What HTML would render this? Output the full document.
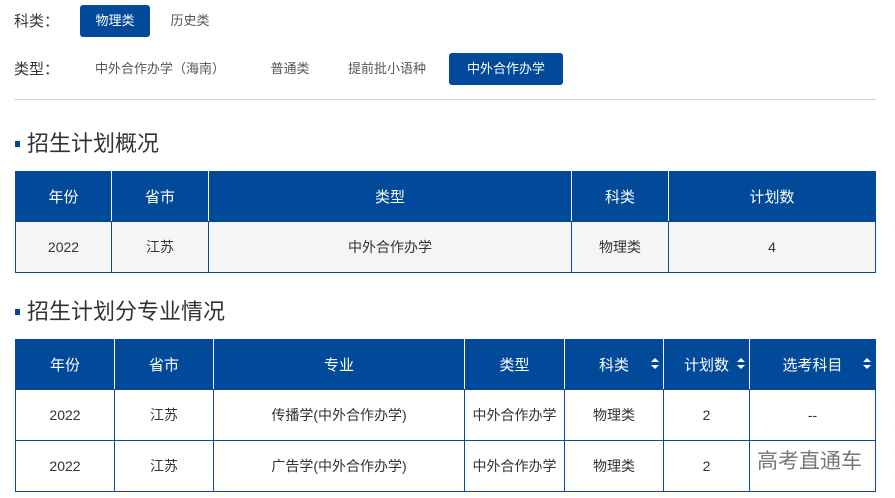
<!DOCTYPE html>
<html><head><meta charset="utf-8"><style>
*{margin:0;padding:0;box-sizing:border-box}
body{width:895px;height:498px;background:#fff;font-family:"Liberation Sans","Noto Sans CJK SC",sans-serif;position:relative;overflow:hidden;color:#333}
.a{position:absolute}
.lbl{font-size:15px;color:#333}
.btn{position:absolute;height:32px;line-height:32px;font-size:13px;text-align:center;color:#555;border-radius:3px}
.on{background:#004a99;color:#fff}
.h{font-size:22px;color:#333;line-height:26px}
.sq{position:absolute;width:5px;height:6px;background:#004a99}
table{position:absolute;border-collapse:collapse;table-layout:fixed}
td,th{border:1px solid #0d4a96;text-align:center;font-size:14px;color:#333;font-weight:normal}
th{background:#004a99;color:#fff;font-size:15px;border-color:#fff;border-top-color:#004a99;border-bottom-color:#004a99}
th:first-child{border-left-color:#004a99}th:last-child{border-right-color:#004a99}
.s{position:relative}
.s:after{content:"";position:absolute;right:4px;top:18px;border:4px solid transparent;border-bottom:4px solid #fff;border-top:none}
.s:before{content:"";position:absolute;right:4px;top:25px;border:4px solid transparent;border-top:4px solid #fff;border-bottom:none}
</style></head><body>
<div class="a lbl" style="left:14px;top:10px">科类：</div>
<div class="btn on" style="left:80px;top:5px;width:70px">物理类</div>
<div class="btn" style="left:155px;top:5px;width:70px">历史类</div>
<div class="a lbl" style="left:14px;top:58px">类型：</div>
<div class="btn" style="left:80px;top:53px;width:160px">中外合作办学（海南）</div>
<div class="btn" style="left:255px;top:53px;width:70px">普通类</div>
<div class="btn" style="left:332px;top:53px;width:110px">提前批小语种</div>
<div class="btn on" style="left:449px;top:53px;width:114px">中外合作办学</div>
<div class="a" style="left:14px;top:99px;width:862px;height:1px;background:#d4d4d4"></div>
<div class="sq" style="left:15px;top:141px"></div>
<div class="a h" style="left:27px;top:131px">招生计划概况</div>
<table style="left:15px;top:171px;width:861px">
<colgroup><col style="width:96px"><col style="width:97px"><col style="width:363px"><col style="width:97px"><col></colgroup>
<tr style="height:50px"><th>年份</th><th>省市</th><th>类型</th><th>科类</th><th>计划数</th></tr>
<tr style="height:51px;background:#f5f5f5"><td>2022</td><td>江苏</td><td>中外合作办学</td><td>物理类</td><td>4</td></tr>
</table>
<div class="sq" style="left:15px;top:309px"></div>
<div class="a h" style="left:27px;top:299px">招生计划分专业情况</div>
<table style="left:15px;top:339px;width:861px">
<colgroup><col style="width:99px"><col style="width:99px"><col style="width:251px"><col style="width:100px"><col style="width:99px"><col style="width:86px"><col></colgroup>
<tr style="height:50px"><th>年份</th><th>省市</th><th>专业</th><th>类型</th><th class="s">科类</th><th class="s">计划数</th><th class="s">选考科目</th></tr>
<tr style="height:51px"><td>2022</td><td>江苏</td><td>传播学(中外合作办学)</td><td>中外合作办学</td><td>物理类</td><td>2</td><td>--</td></tr>
<tr style="height:51px"><td>2022</td><td>江苏</td><td>广告学(中外合作办学)</td><td>中外合作办学</td><td>物理类</td><td>2</td><td></td></tr>
</table>
<div class="a" style="left:757px;top:445px;font-size:21px;color:#777">高考直通车</div>
</body></html>
